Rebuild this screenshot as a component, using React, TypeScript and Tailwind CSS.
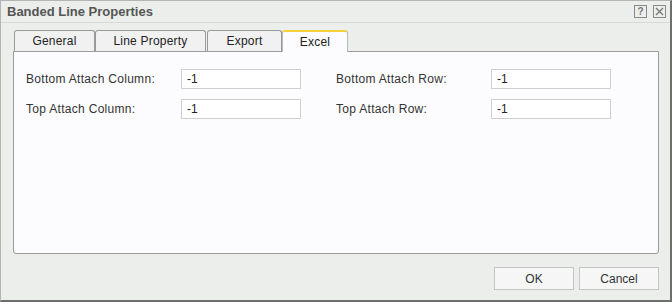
import React, { useState } from 'react';

const tabs = [
  { id: 'general', label: 'General', width: 'w-[81px]' },
  { id: 'line', label: 'Line Property', width: 'w-[111px] mr-[1px]' },
  { id: 'export', label: 'Export', width: 'w-[75px]' },
  { id: 'excel', label: 'Excel', width: 'w-[66px]' },
];

const Field: React.FC<{ label: string; value: string; labelWidth: string }> = ({ label, value, labelWidth }) => (
  <div className="flex items-center h-[20px]">
    <span className={`${labelWidth} text-[12px] tracking-[0.3px] text-[#333]`}>{label}</span>
    <input
      value={value}
      readOnly
      className="w-[120px] h-[20px] border border-[#cfcfcf] bg-white px-[5px] text-[12px] text-[#222] outline-none"
    />
  </div>
);

const App: React.FC = () => {
  const [active, setActive] = useState('excel');

  return (
    <div
      className="w-[672px] h-[302px] bg-[#ebeeea] border-l border-t border-[#b4b4b4] border-r-2 border-b-2 border-r-[#6e6e6e] border-b-[#6e6e6e] flex flex-col"
      style={{ fontFamily: '"Liberation Sans", Arial, sans-serif' }}
    >
      {/* title bar */}
      <div className="h-[22px] shrink-0 border-b border-[#d6d9d5] flex items-center justify-between pl-[6px] pr-[4px]">
        <span className="text-[13px] font-bold text-[#555]">Banded Line Properties</span>
        <div className="flex gap-[6px]">
          <button className="w-[13px] h-[13px] border border-[#8a8a8a] flex items-center justify-center text-[10px] font-bold leading-none text-[#777]">
            ?
          </button>
          <button className="w-[13px] h-[13px] border border-[#8a8a8a] flex items-center justify-center">
            <svg width="9" height="9" viewBox="0 0 9 9">
              <path d="M1 1 L8 8 M8 1 L1 8" stroke="#777" strokeWidth="1.3" />
            </svg>
          </button>
        </div>
      </div>

      <div className="flex flex-col pl-[12px] pr-[11px] pt-[6px]">
        {/* tabs */}
        <div className="flex items-end h-[22px] pl-[1px]">
          {tabs.map((t) => {
            const isActive = t.id === active;
            return (
              <button
                key={t.id}
                onClick={() => setActive(t.id)}
                className={`${t.width} text-[12px] tracking-[0.2px] text-[#222] rounded-t-[3px] border border-b-0 flex items-center justify-center ${
                  isActive
                    ? 'h-[22px] bg-[#fcfbfd] border-[#b9b9b9] border-t-2 border-t-[#f5cf3c] relative top-[1px] -mt-[1px]'
                    : 'h-[21px] bg-[#f1f1f2] border-[#9a9a9a] border-b border-b-[#9a9a9a]'
                }`}
              >
                {t.label}
              </button>
            );
          })}
        </div>

        {/* panel */}
        <div className="h-[203px] border border-[#9a9a9a] rounded-b-[3px] bg-[#fcfbfd] pl-[12px] pt-[17px] grid grid-cols-[310px_1fr] gap-y-[10px] content-start">
          <Field label="Bottom Attach Column:" value="-1" labelWidth="w-[155px]" />
          <Field label="Bottom Attach Row:" value="-1" labelWidth="w-[155px]" />
          <Field label="Top Attach Column:" value="-1" labelWidth="w-[155px]" />
          <Field label="Top Attach Row:" value="-1" labelWidth="w-[155px]" />
        </div>

        {/* buttons */}
        <div className="flex justify-end gap-[5px] mt-[13px]">
          <button className="w-[80px] h-[23px] border border-[#c4c4c4] bg-[#f6f6f6] text-[12px] text-[#333]">OK</button>
          <button className="w-[80px] h-[23px] border border-[#c4c4c4] bg-[#f6f6f6] text-[12px] text-[#333]">Cancel</button>
        </div>
      </div>
    </div>
  );
};

export default App;
